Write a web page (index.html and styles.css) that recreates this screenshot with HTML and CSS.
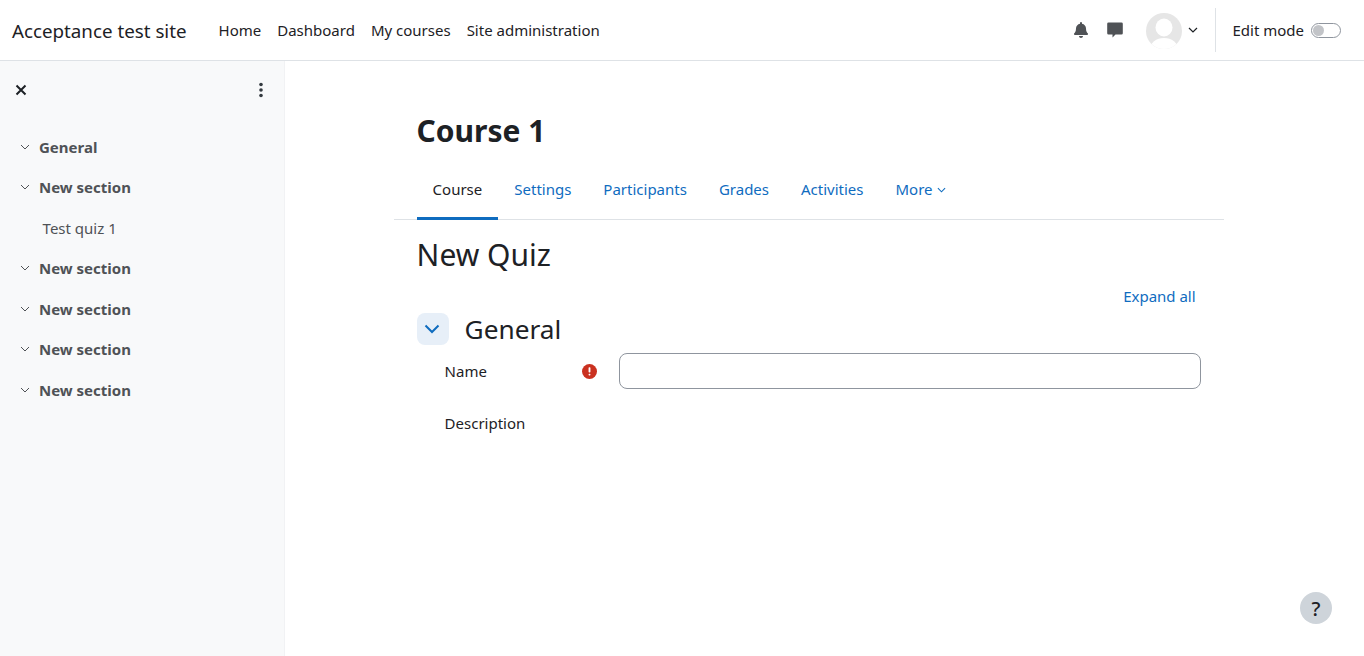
FILE: index.html
```html
<!DOCTYPE html>
<html lang="en">
<head>
    <meta charset="UTF-8">
    <meta name="viewport" content="width=device-width, initial-scale=1.0">
    <title>New Quiz</title>
    <link rel="stylesheet" href="styles.css">
</head>
<body>
<nav class="navbar">
    <a class="brand" href="#">Acceptance test site</a>
    <div class="primary-nav">
        <a href="#">Home</a>
        <a href="#">Dashboard</a>
        <a href="#">My courses</a>
        <a href="#">Site administration</a>
    </div>
    <div class="usernav">
        <svg class="icon-bell" viewBox="0 0 448 512" width="14" height="16"><path fill="#4f5256" d="M224 512c35 0 64-29 64-64H160c0 35 29 64 64 64zm215-150c-19-21-55-52-55-154 0-78-54-140-128-155V32a32 32 0 1 0-64 0v21C118 68 64 130 64 208c0 102-36 133-55 154-6 6-9 14-9 22 0 16 13 32 32 32h384c19 0 32-16 32-32 0-8-3-16-9-22z"/></svg>
        <svg class="icon-chat" viewBox="0 0 16 16" width="16" height="16"><path fill="#4f5256" d="M1.500 0.500h13A1.300 1.300 0 0 1 15.800 1.800v9.400a1.300 1.300 0 0 1-1.300 1.300H8.500L5.500 15.500V12.500H1.500A1.300 1.300 0 0 1 0.200 11.200V1.800A1.300 1.300 0 0 1 1.500 0.500z"/></svg>
        <svg class="avatar" viewBox="0 0 36 36" width="36" height="36">
            <defs><clipPath id="avatarClip"><circle cx="18" cy="18" r="18"/></clipPath></defs>
            <circle cx="18" cy="18" r="18" fill="#e6e6e6"/>
            <g clip-path="url(#avatarClip)" fill="#fff">
                <ellipse cx="18" cy="14.500" rx="8.500" ry="9"/>
                <ellipse cx="18" cy="36" rx="14" ry="11"/>
            </g>
        </svg>
        <svg class="caret" viewBox="0 0 10 6" width="10" height="6"><path d="M1 1l4 4 4-4" fill="none" stroke="#1d2125" stroke-width="1.200"/></svg>
        <div class="editmode">
            <span>Edit mode</span>
            <span class="switch"><span class="knob"></span></span>
        </div>
    </div>
</nav>

<div class="layout">
    <aside class="drawer">
        <div class="drawer-head">
            <svg viewBox="0 0 12 12" width="12" height="12"><path d="M1.500 1.500l9 9m0-9l-9 9" stroke="#1d2125" stroke-width="2" fill="none"/></svg>
            <svg viewBox="0 0 4 16" width="4" height="16"><g fill="#343a40"><circle cx="2" cy="2.500" r="1.800"/><circle cx="2" cy="8" r="1.800"/><circle cx="2" cy="13.500" r="1.800"/></g></svg>
        </div>
        <ul class="course-index">
            <li class="section"><svg viewBox="0 0 10 6" width="10" height="6"><path d="M1 1l4 4 4-4" fill="none" stroke="#4f5256" stroke-width="1"/></svg>General</li>
            <li class="section"><svg viewBox="0 0 10 6" width="10" height="6"><path d="M1 1l4 4 4-4" fill="none" stroke="#4f5256" stroke-width="1"/></svg>New section</li>
            <li class="activity">Test quiz 1</li>
            <li class="section"><svg viewBox="0 0 10 6" width="10" height="6"><path d="M1 1l4 4 4-4" fill="none" stroke="#4f5256" stroke-width="1"/></svg>New section</li>
            <li class="section"><svg viewBox="0 0 10 6" width="10" height="6"><path d="M1 1l4 4 4-4" fill="none" stroke="#4f5256" stroke-width="1"/></svg>New section</li>
            <li class="section"><svg viewBox="0 0 10 6" width="10" height="6"><path d="M1 1l4 4 4-4" fill="none" stroke="#4f5256" stroke-width="1"/></svg>New section</li>
            <li class="section"><svg viewBox="0 0 10 6" width="10" height="6"><path d="M1 1l4 4 4-4" fill="none" stroke="#4f5256" stroke-width="1"/></svg>New section</li>
        </ul>
    </aside>

    <main class="main">
        <h1 class="course-title">Course 1</h1>
        <div class="tabs">
            <a class="active" href="#">Course</a>
            <a href="#">Settings</a>
            <a href="#">Participants</a>
            <a href="#">Grades</a>
            <a href="#">Activities</a>
            <a href="#">More<svg viewBox="0 0 10 6" width="9" height="6"><path d="M1 1l4 4 4-4" fill="none" stroke="#0f6cbf" stroke-width="1.200"/></svg></a>
        </div>
        <div class="content">
            <h2 class="page-title">New Quiz</h2>
            <div class="expand-row"><a href="#">Expand all</a></div>
            <div class="fieldset-head">
                <span class="collapse-btn"><svg viewBox="0 0 16 10" width="16" height="10"><path d="M1.500 1.500L8 8l6.500-6.500" fill="none" stroke="#0f6cbf" stroke-width="2"/></svg></span>
                <h3>General</h3>
            </div>
            <div class="form-row">
                <label class="form-label">Name</label>
                <span class="required"><svg viewBox="0 0 16 16" width="15" height="15"><circle cx="8" cy="8" r="8" fill="#ca3120"/><rect x="7" y="3.500" width="2" height="5.500" rx="0.800" fill="#fff"/><rect x="7" y="10.300" width="2" height="2" rx="0.800" fill="#fff"/></svg></span>
                <input class="form-input" type="text">
            </div>
            <div class="form-row desc-row">
                <label class="form-label">Description</label>
            </div>
        </div>
    </main>
</div>

<button class="help-btn" type="button">?</button>
</body>
</html>
```

FILE: styles.css
```css
* {
    margin: 0;
    padding: 0;
    box-sizing: border-box;
}

a {
    text-decoration: none;
    color: #0f6cbf;
}

html, body {
    height: 100%;
    overflow: hidden;
}

body {
    display: flex;
    flex-direction: column;
    background: #fff;
    color: #1d2125;
    font-family: "Noto Sans", sans-serif;
    font-size: 15px;
    line-height: 22px;
}

.navbar {
    height: 61px;
    flex: none;
    display: flex;
    align-items: center;
    padding: 0 23px 0 12px;
    border-bottom: 1px solid #dee2e6;
}

.brand {
    color: #1d2125;
    font-size: 18.750px;
    margin-right: 32px;
    padding-top: 1px;
}

.primary-nav {
    display: flex;
    gap: 16px;
}

.primary-nav a {
    color: #1d2125;
}

.usernav {
    margin-left: auto;
    display: flex;
    align-items: center;
}

.icon-bell {
    margin-right: 19px;
}

.icon-chat {
    margin-right: 22px;
}

.avatar {
    margin: 1px -1px 0 1px;
}

.caret {
    margin-left: 7px;
}

.editmode {
    height: 44px;
    margin-left: 17px;
    padding-left: 16px;
    border-left: 1px solid #dee2e6;
    display: flex;
    align-items: center;
    gap: 7px;
}

.switch {
    width: 30px;
    height: 15px;
    border: 1px solid #8f959e;
    border-radius: 8px;
    padding: 1px;
    display: block;
}

.knob {
    display: block;
    width: 11px;
    height: 11px;
    border-radius: 50%;
    background: #c2c4c8;
}

.layout {
    flex: 1;
    display: flex;
    min-height: 0;
}

.drawer {
    width: 285px;
    flex: none;
    background: #f8f9fa;
    border-right: 1px solid #f1f2f4;
}

.drawer-head {
    height: 58px;
    padding: 0 21px 0 15px;
    display: flex;
    justify-content: space-between;
    align-items: center;
}

.course-index {
    list-style: none;
    margin-top: 7.600px;
}

.course-index li {
    height: 40.500px;
    display: flex;
    align-items: center;
    color: #4f5256;
}

.section {
    font-weight: 700;
    padding-left: 20px;
}

.section svg {
    margin-right: 9px;
}

.activity {
    padding-left: 42.600px;
}

.main {
    flex: 1;
    padding: 0 0 0 109px;
}

.course-title {
    font-size: 30px;
    line-height: 36px;
    font-weight: 700;
    padding: 52px 0 0 22.600px;
}

.tabs {
    width: 830px;
    margin-top: 16px;
    padding-left: 22.600px;
    height: 55px;
    display: flex;
    border-bottom: 1px solid #dee2e6;
}

.tabs a {
    padding: 0 16px;
    height: 55px;
    line-height: 48px;
}

.tabs a svg {
    margin-left: 4px;
    vertical-align: 2px;
}

.tabs a.active {
    color: #1d2125;
    border-bottom: 3px solid #0f6cbf;
}

.content {
    width: 830px;
    padding: 0 23px 0 22.600px;
}

.page-title {
    font-size: 30px;
    line-height: 36px;
    font-weight: 400;
    padding-top: 17px;
}

.expand-row {
    display: flex;
    justify-content: flex-end;
    padding-right: 5.400px;
    margin-top: 12px;
}

.fieldset-head {
    display: flex;
    align-items: center;
    gap: 16px;
    margin-top: 6px;
    height: 32px;
}

.collapse-btn {
    width: 32px;
    height: 32px;
    border-radius: 8px;
    background: #e7eff8;
    display: flex;
    align-items: center;
    justify-content: center;
    padding-right: 1px;
}

.fieldset-head h3 {
    font-size: 26.250px;
    line-height: 32px;
    font-weight: 400;
}

.form-row {
    display: flex;
    align-items: center;
    padding-left: 28px;
    margin-top: 8px;
}

.form-label {
    width: 137px;
}

.required {
    width: 37.400px;
    height: 15px;
    display: block;
}

.required svg {
    display: block;
}

.form-input {
    width: 582px;
    height: 36px;
    border: 1px solid #8f959e;
    border-radius: 8px;
    outline: none;
    background: #fff;
}

.desc-row {
    margin-top: 23px;
}

.help-btn {
    position: absolute;
    left: 1300px;
    top: 592px;
    width: 32px;
    height: 32px;
    border: 0;
    border-radius: 50%;
    background: #ced4da;
    color: #1d2125;
    font-family: "Noto Sans", sans-serif;
    font-size: 20px;
    font-weight: 500;
}
```
